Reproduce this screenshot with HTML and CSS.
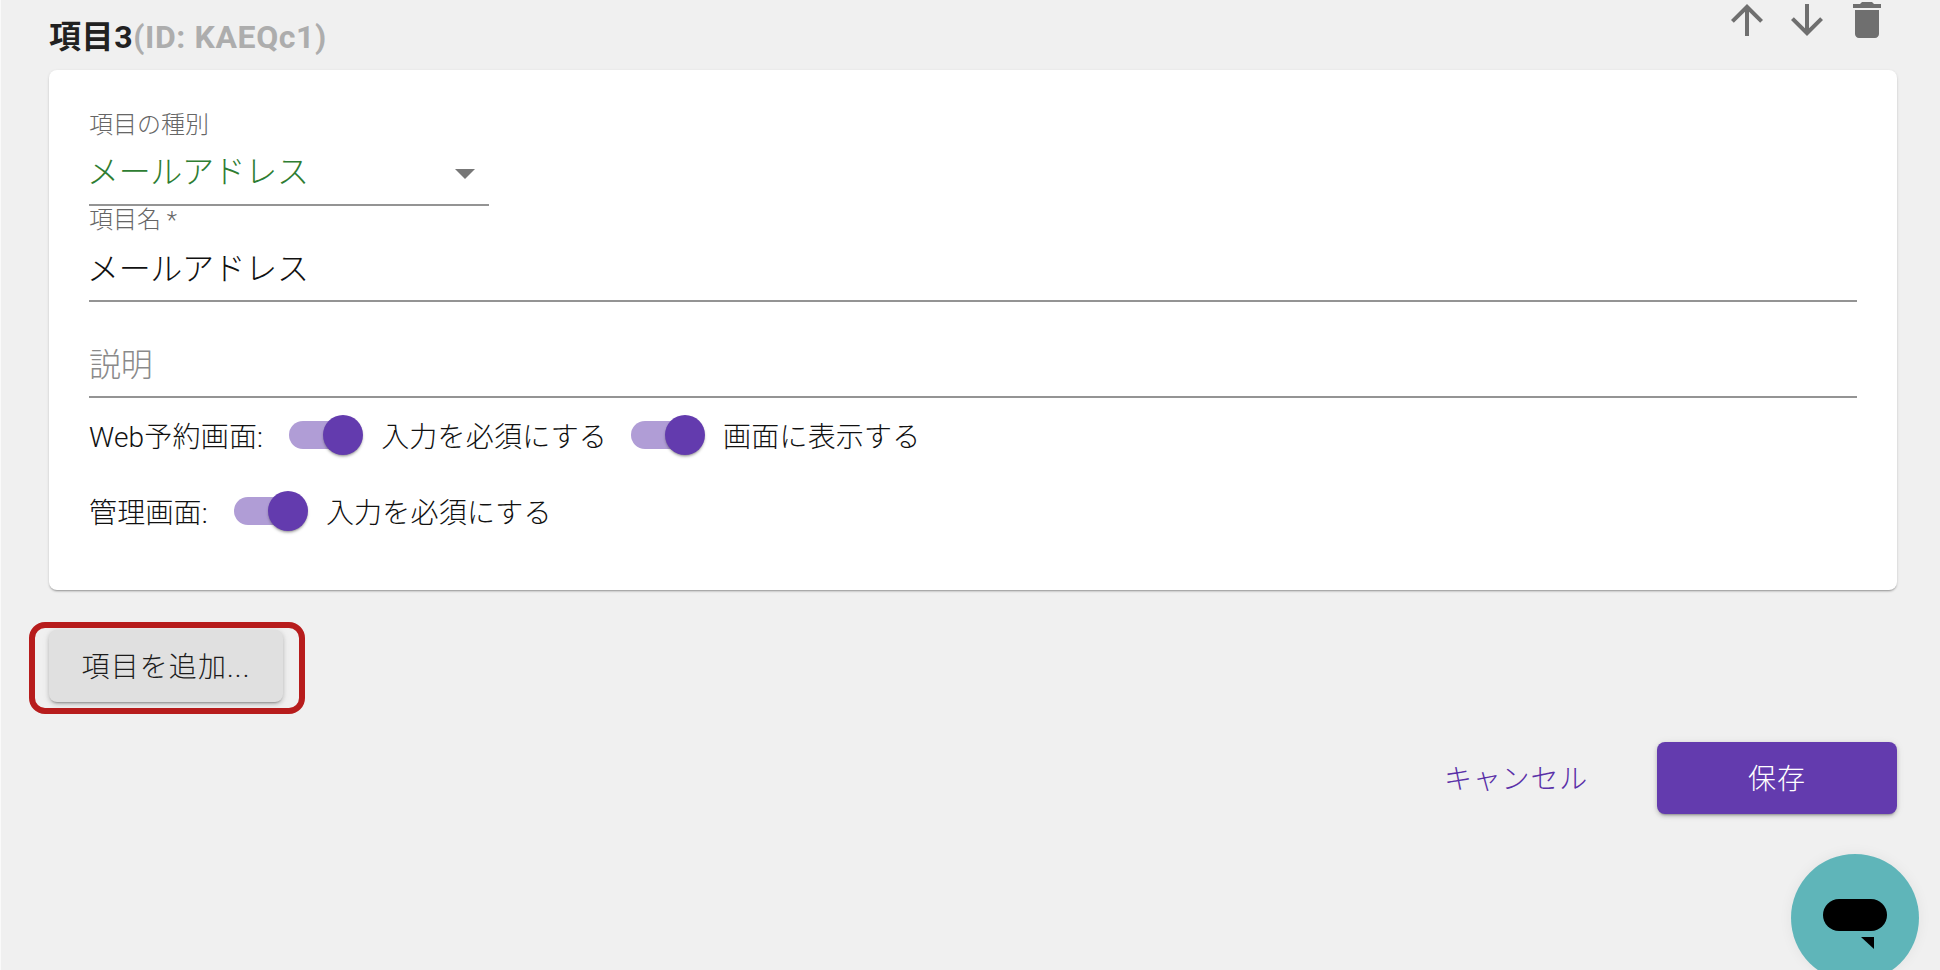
FILE: index.html
```html
<!DOCTYPE html>
<html lang="ja">
<head>
<meta charset="utf-8">
<title>項目の編集</title>
<link rel="stylesheet" href="styles.css">
</head>
<body>
<main class="page">
  <header class="item-head">
    <h2 class="item-title">項目3<span class="item-id">(ID: KAEQc1)</span></h2>
    <div class="item-tools">
      <svg class="tool" viewBox="0 0 24 24"><path d="M4 12l1.41 1.41L11 7.83V20h2V7.83l5.58 5.59L20 12l-8-8-8 8z"/></svg>
      <svg class="tool" viewBox="0 0 24 24"><path d="M20 12l-1.41-1.41L13 16.17V4h-2v12.17l-5.58-5.59L4 12l8 8 8-8z"/></svg>
      <svg class="tool" viewBox="0 0 24 24"><path d="M6 19c0 1.1.9 2 2 2h8c1.1 0 2-.9 2-2V7H6v12zM19 4h-3.5l-1-1h-5l-1 1H5v2h14V4z"/></svg>
    </div>
  </header>

  <section class="card">
    <div class="field field-select">
      <label class="field-label">項目の種別</label>
      <div class="field-value value-select">メールアドレス<span class="caret"></span></div>
    </div>
    <div class="field field-name">
      <label class="field-label">項目名 *</label>
      <div class="field-value">メールアドレス</div>
    </div>
    <div class="field field-desc">
      <div class="field-value value-placeholder">説明</div>
    </div>
    <div class="switch-row row-web">
      <span class="row-label">Web予約画面:</span>
      <span class="switch"><span class="track"></span><span class="thumb"></span></span>
      <span class="switch-text">入力を必須にする</span>
      <span class="switch switch-next"><span class="track"></span><span class="thumb"></span></span>
      <span class="switch-text">画面に表示する</span>
    </div>
    <div class="switch-row row-admin">
      <span class="row-label">管理画面:</span>
      <span class="switch"><span class="track"></span><span class="thumb"></span></span>
      <span class="switch-text">入力を必須にする</span>
    </div>
  </section>

  <div class="add-wrap">
    <button class="btn btn-add" type="button">項目を追加...</button>
    <span class="highlight"></span>
  </div>

  <div class="actions">
    <button class="btn btn-text" type="button">キャンセル</button>
    <button class="btn btn-save" type="button">保存</button>
  </div>
</main>

<div class="fab">
  <svg class="fab-icon" viewBox="0 0 64 50"><rect x="0" y="0" width="64" height="32" rx="16"/><path d="M38 38h13v12z"/></svg>
</div>
</body>
</html>
```

FILE: styles.css
```css
* { box-sizing: border-box; }
html, body { margin: 0; height: 100%; }
body {
  background: #f0f0f0;
  overflow: hidden;
  font-family: Roboto, "Noto Sans CJK JP", sans-serif;
  color: #212121;
}
.page {
  height: 970px;
  border-left: 1px solid #fafafa;
  padding-left: 48px;
  padding-right: 43px;
}
.item-head {
  height: 70px;
  display: flex;
  justify-content: space-between;
  align-items: flex-start;
}
.item-title {
  margin: 18px 0 0;
  font-size: 32px;
  line-height: 38px;
  font-weight: 700;
  letter-spacing: .6px;
  color: #212121;
}
.item-id { color: #adadad; }
.item-tools {
  display: flex;
  gap: 12px;
  margin-top: -4px;
  margin-right: 6px;
}
.tool { width: 48px; height: 48px; fill: #6f6f6f; display: block; }

.card {
  height: 520px;
  background: #fff;
  border-radius: 8px;
  padding: 41px 40px 0;
  box-shadow: 0 2px 2px -1px rgba(0,0,0,.3), 0 1px 3px rgba(0,0,0,.14);
}
.field-label {
  display: block;
  font-size: 24px;
  line-height: 28px;
  font-weight: 300;
  color: #666;
}
.field-value {
  font-size: 32px;
  font-weight: 300;
  color: #111;
  border-bottom: 2px solid #949494;
  position: relative;
  letter-spacing: -.35px;
  text-indent: -2px;
}
.field-select { width: 400px; }
.value-select { color: #2e7d32; height: 67px; line-height: 66px; }
.field-name .field-value { height: 68px; line-height: 70px; }
.field-desc { margin-top: 32px; }
.value-placeholder { color: #8a8a8a; height: 64px; line-height: 62px; text-indent: 0; }
.caret {
  position: absolute;
  right: 14px;
  top: 30px;
  width: 0;
  height: 0;
  border-left: 10px solid transparent;
  border-right: 10px solid transparent;
  border-top: 10px solid #777;
}
.switch-row {
  display: flex;
  align-items: center;
  height: 76px;
  font-size: 28px;
  font-weight: 300;
  color: #111;
  letter-spacing: .2px;
}
.row-web { margin-top: -1px; }
.row-label { white-space: nowrap; }
.switch {
  position: relative;
  width: 116px;
  height: 76px;
  flex: none;
  margin-left: 2px;
}
.switch-next { margin-left: 0; }
.track {
  position: absolute;
  left: 24px;
  top: 24px;
  width: 68px;
  height: 28px;
  border-radius: 14px;
  background: #b09dd6;
}
.thumb {
  position: absolute;
  left: 58px;
  top: 18px;
  width: 40px;
  height: 40px;
  border-radius: 50%;
  background: #633bae;
  box-shadow: 0 2px 2px -1px rgba(0,0,0,.25), 0 2px 3px rgba(0,0,0,.2);
}
.switch-text { white-space: nowrap; }

.btn {
  font-family: inherit;
  font-size: 28px;
  font-weight: 300;
  letter-spacing: 1.1px;
  border: 0;
  border-radius: 8px;
  height: 72px;
  background: none;
  padding: 0 32px 2px;
}
.add-wrap {
  position: relative;
  width: 234px;
  margin-top: 40px;
}
.btn-add {
  width: 234px;
  background: #e0e0e0;
  color: #1c1c1c;
  display: block;
  padding: 0 0 2px;
  box-shadow: 0 3px 2px -2px rgba(0,0,0,.25), 0 2px 4px rgba(0,0,0,.18), 0 1px 8px rgba(0,0,0,.08);
}
.highlight {
  position: absolute;
  left: -20px;
  right: -22px;
  top: -8px;
  bottom: -12px;
  border: 6px solid #b71c1c;
  border-radius: 16px;
}
.actions {
  display: flex;
  justify-content: flex-end;
  align-items: center;
  gap: 37px;
  margin-top: 40px;
}
.btn-text { color: #5a30a8; letter-spacing: .8px; }
.btn-save {
  width: 240px;
  background: #633bae;
  color: #fff;
  box-shadow: 0 3px 2px -2px rgba(0,0,0,.25), 0 2px 4px rgba(0,0,0,.18), 0 1px 8px rgba(0,0,0,.08);
}
.fab {
  position: fixed;
  left: 1791px;
  top: 854px;
  width: 128px;
  height: 128px;
  border-radius: 50%;
  background: #5fb5b9;
  box-shadow: 0 0 14px rgba(0,0,0,.06);
}
.fab-icon {
  position: absolute;
  left: 32px;
  top: 45px;
  width: 64px;
  height: 50px;
  fill: #000;
}
```
